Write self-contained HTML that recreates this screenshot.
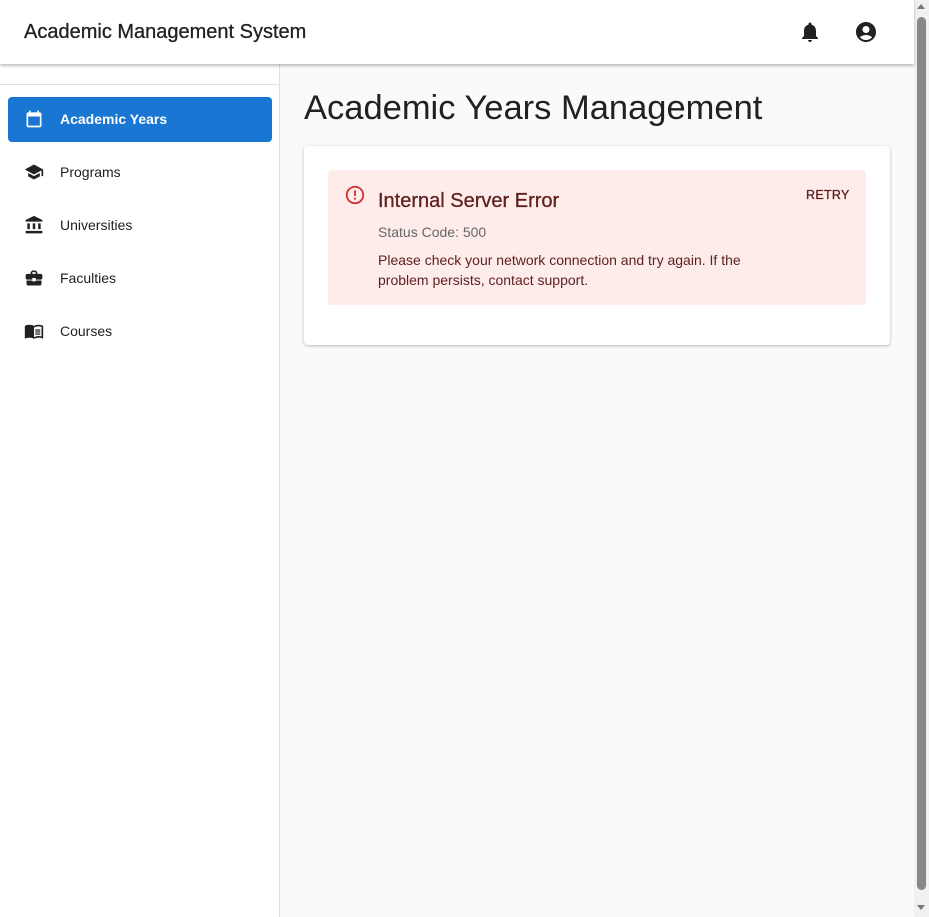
<!DOCTYPE html>
<html><head><style>
*{box-sizing:border-box;margin:0;padding:0}
body{width:929px;height:917px;overflow:hidden;font-family:"Liberation Sans",Roboto,sans-serif;background:#fafafa;position:relative;color:#212121}
.hdr{position:absolute;left:0;top:0;width:914px;height:64px;background:#fff;box-shadow:0 2px 3px rgba(0,0,0,.25);z-index:2}
.hdr h1{position:absolute;left:24px;top:21px;font-size:20px;font-weight:500;color:#212121;-webkit-text-stroke:.3px #212121}
.side{position:absolute;left:0;top:64px;width:280px;height:853px;background:#fff;border-right:1px solid #e0e0e0}
.side .div{position:absolute;left:0;top:20px;width:279px;border-top:1px solid #e0e0e0}
.item{position:absolute;left:8px;width:264px;height:45px;border-radius:4px;font-size:14px;display:flex;align-items:center}
.item svg{position:absolute;left:16px;top:12px}
.item span{position:absolute;left:52px;top:14px}
.act{background:#1976d2;color:#fff;font-weight:bold}
h2{position:absolute;left:304px;top:89px;font-size:34.5px;font-weight:400;color:#212121}
.card{position:absolute;left:304px;top:146px;width:586px;height:199px;background:#fff;border-radius:4px;box-shadow:0 1px 3px rgba(0,0,0,.25)}
.err{position:absolute;left:24px;top:24px;width:538px;height:135px;background:#fdecea;border-radius:4px;color:#5f2120}
.scroll{position:absolute;left:914px;top:0;width:15px;height:917px;background:#f1f1f1}
.thumb{position:absolute;left:3px;top:17px;width:9px;height:873px;background:#888;border-radius:5px}
</style></head><body>
<div class="hdr"><h1>Academic Management System</h1>
<svg style="position:absolute;left:798px;top:20px" width="24" height="24" viewBox="0 0 24 24"><path fill="#212121" d="M12 22c1.1 0 2-.9 2-2h-4c0 1.1.89 2 2 2zm6-6v-5c0-3.070-1.64-5.640-4.5-6.32V4c0-.83-.67-1.5-1.5-1.5s-1.5.67-1.5 1.5v.68C7.63 5.36 6 7.92 6 11v5l-2 2v1h16v-1l-2-2z"/></svg>
<svg style="position:absolute;left:854px;top:20px" width="24" height="24" viewBox="0 0 24 24"><path fill="#212121" d="M12 2C6.48 2 2 6.48 2 12s4.48 10 10 10 10-4.48 10-10S17.52 2 12 2zm0 4c1.93 0 3.5 1.57 3.5 3.5S13.93 13 12 13s-3.5-1.57-3.5-3.5S10.07 6 12 6zm0 14c-2.03 0-4.430-.82-6.14-2.88C7.55 15.8 9.68 15 12 15s4.45.8 6.14 2.12C16.43 19.18 14.03 20 12 20z"/></svg>
</div>
<div class="side"><div class="div"></div>
<div class="item act" style="top:33px"><svg width="20" height="20" viewBox="0 0 24 24"><path fill="#fff" d="M19 4h-1V2h-2v2H8V2H6v2H5c-1.1 0-2 .9-2 2v14c0 1.1.9 2 2 2h14c1.1 0 2-.9 2-2V6c0-1.1-.9-2-2-2zm0 16H5V9h14v11z"/></svg><span>Academic Years</span></div>
<div class="item" style="top:86px"><svg width="20" height="20" viewBox="0 0 24 24"><path fill="#212121" d="M5 13.18v4L12 21l7-3.82v-4L12 17l-7-3.82zM12 3 1 9l11 6 9-4.91V17h2V9L12 3z"/></svg><span>Programs</span></div>
<div class="item" style="top:139px"><svg width="20" height="20" viewBox="0 0 24 24"><path fill="#212121" d="M4 10h3v7H4zm6.5 0h3v7h-3zM2 19h20v3H2zm15-9h3v7h-3zm-5-9L2 6v2h20V6z"/></svg><span>Universities</span></div>
<div class="item" style="top:192px"><svg width="20" height="20" viewBox="0 0 24 24"><path fill="#212121" d="M10 16v-1H3.01L3 19c0 1.11.89 2 2 2h14c1.11 0 2-.89 2-2v-4h-7v1h-4zm10-9h-4.01V5l-2-2h-4l-2 2v2H4c-1.1 0-2 .9-2 2v3c0 1.110.89 2 2 2h6v-2h4v2h6c1.1 0 2-.9 2-2V9c0-1.1-.9-2-2-2zm-6 0h-4V5h4v2z"/></svg><span>Faculties</span></div>
<div class="item" style="top:245px"><svg width="20" height="20" viewBox="0 0 24 24"><path fill="#212121" d="M21 5c-1.11-.35-2.33-.5-3.5-.5-1.95 0-4.05.4-5.5 1.5-1.45-1.1-3.55-1.5-5.5-1.5S2.45 4.9 1 6v14.65c0 .25.25.5.5.5.1 0 .15-.05.25-.05C3.1 20.45 5.05 20 6.5 20c1.95 0 4.05.4 5.5 1.5 1.35-.85 3.8-1.5 5.5-1.5 1.65 0 3.35.3 4.750 1.05.1.05.15.05.25.05.25 0 .5-.25.5-.5V6c-.6-.45-1.25-.75-2-1zm0 13.5c-1.1-.35-2.3-.5-3.5-.5-1.7 0-4.15.65-5.5 1.5V8c1.35-.85 3.8-1.5 5.5-1.5 1.2 0 2.4.15 3.5.5v11.5zM13.5 10h6v1.5h-6zm0 2.5h6V14h-6zm0 2.5h6v1.5h-6z"/></svg><span>Courses</span></div>
</div>
<h2>Academic Years Management</h2>
<div class="card"><div class="err">
<svg style="position:absolute;left:16px;top:14px" width="22" height="22" viewBox="0 0 24 24"><path fill="#d32f2f" d="M11 15h2v2h-2zm0-8h2v6h-2zm1-5C6.47 2 2 6.48 2 12s4.47 10 10 10c5.52 0 10-4.48 10-10S17.520 2 12 2zm0 18c-4.42 0-8-3.58-8-8s3.58-8 8-8 8 3.58 8 8-3.58 8-8 8z"/></svg>
<div style="position:absolute;left:50px;top:20px;font-size:20px;font-weight:500;-webkit-text-stroke:.3px #5f2120">Internal Server Error</div>
<div style="position:absolute;left:50px;top:54px;font-size:14px;color:#666">Status Code: 500</div>
<div style="position:absolute;left:50px;top:80px;font-size:14px;line-height:20px;width:400px">Please check your network connection and try again. If the problem persists, contact support.</div>
<div style="position:absolute;left:478px;top:18px;font-size:12.5px;font-weight:500;letter-spacing:.3px;-webkit-text-stroke:.3px #5f2120">RETRY</div>
</div></div>
<div class="scroll"><div class="thumb"></div>
<div style="position:absolute;left:3px;top:4px;border:4.5px solid transparent;border-bottom:5px solid #777;border-top:0"></div>
<div style="position:absolute;left:3px;top:905px;border:4.5px solid transparent;border-top:5px solid #777;border-bottom:0"></div>
</div>
</body></html>
